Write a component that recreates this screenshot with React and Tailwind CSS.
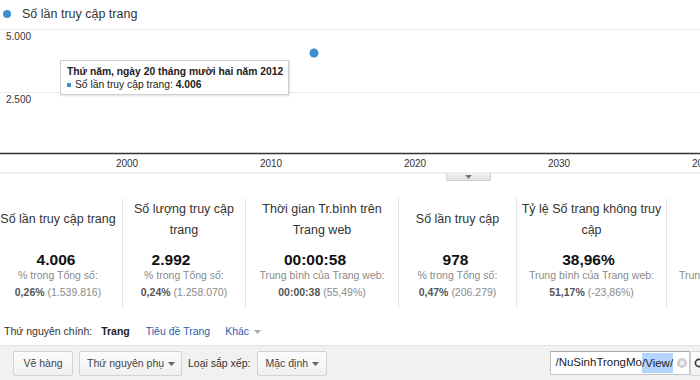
import React from "react";

const metrics = [
  {
    col: "w-[122px] pr-[6px]",
    title: ["Số lần truy cập trang"],
    value: "4.006",
    shift: "pr-[4px]",
    label: "% trong Tổng số:",
    strong: "0,26%",
    rest: "(1.539.816)",
  },
  {
    col: "w-[123px] border-l border-[#e6e6e6]",
    title: ["Số lượng truy cập", "trang"],
    value: "2.992",
    shift: "pr-[26px]",
    label: "% trong Tổng số:",
    strong: "0,24%",
    rest: "(1.258.070)",
  },
  {
    col: "w-[153px] border-l border-[#e6e6e6]",
    title: ["Thời gian Tr.bình trên", "Trang web"],
    value: "00:00:58",
    shift: "pr-[14px]",
    label: "Trung bình của Trang web:",
    strong: "00:00:38",
    rest: "(55,49%)",
  },
  {
    col: "w-[118px] border-l border-[#e6e6e6]",
    title: ["Số lần truy cập"],
    value: "978",
    shift: "pr-[4px]",
    label: "% trong Tổng số:",
    strong: "0,47%",
    rest: "(206.279)",
  },
  {
    col: "w-[150px] border-l border-[#e6e6e6]",
    title: ["Tỷ lệ Số trang không truy", "cập"],
    value: "38,96%",
    shift: "pr-[6px]",
    label: "Trung bình của Trang web:",
    strong: "51,17%",
    rest: "(-23,86%)",
  },
  {
    col: "w-[150px] border-l border-[#e6e6e6]",
    title: [""],
    value: "",
    shift: "",
    label: "Trung bình của Trang web:",
    strong: "",
    rest: "",
  },
];

const years = [
  { x: 127, t: "2000" },
  { x: 271, t: "2010" },
  { x: 415, t: "2020" },
  { x: 559, t: "2030" },
  { x: 703, t: "2040" },
];

const Caret = ({ className = "" }) => (
  <svg width="7" height="4" viewBox="0 0 7 4" className={`shrink-0 ${className}`}>
    <path d="M0 0h7L3.5 4z" fill="currentColor" />
  </svg>
);

const Chart = () => (
  <div className="relative h-[152px]">
    <svg width="700" height="152" className="block">
      <line x1="0" y1="1.5" x2="700" y2="1.5" stroke="#ececec" />
      <text x="6" y="12" fontSize="10" fill="#333">5.000</text>
      <line x1="0" y1="64.5" x2="700" y2="64.5" stroke="#ececec" />
      <text x="6" y="75" fontSize="10" fill="#333">2.500</text>
      <line x1="0" y1="125.5" x2="700" y2="125.5" stroke="#333" strokeWidth="1.5" />
      {years.map((y) => (
        <text key={y.t} x={y.x} y="139" fontSize="10" fill="#333" textAnchor="middle">
          {y.t}
        </text>
      ))}
      <line x1="0" y1="145" x2="700" y2="145" stroke="#dcdcdc" />
      <circle cx="314" cy="25" r="4.5" fill="#3b8fcf" />
    </svg>

    {/* tooltip */}
    <div className="absolute left-[60px] top-[32px] w-[229px] h-[35px] bg-white border border-[#cfcfcf] shadow-[1px_1px_2px_rgba(0,0,0,0.12)] px-[6px] pt-[4px] text-[10.3px] text-[#222]">
      <div className="font-bold leading-[14px] whitespace-nowrap">
        Thứ năm, ngày 20 tháng mười hai năm 2012
      </div>
      <div className="flex items-center leading-[12px] whitespace-nowrap">
        <span className="w-[4px] h-[4px] bg-[#3b8fcf] mr-[4px]" />
        Số lần truy cập trang:&nbsp;<b>4.006</b>
      </div>
    </div>

    {/* slider handle */}
    <div className="absolute left-[446px] top-[145px] w-[45px] h-[8px] bg-linear-to-b from-[#f4f4f4] to-[#e2e2e2] border border-t-0 border-[#d0d0d0] rounded-b-[2px] flex items-center justify-center text-[#777]">
      <Caret />
    </div>
  </div>
);

const Metric = ({ m }) => (
  <div className={`${m.col} shrink-0 h-[110px] flex flex-col items-center text-center`}>
    <div className="h-[43px] flex flex-col justify-center text-[12.5px] leading-[21px] text-[#333] whitespace-nowrap">
      {m.title.map((t) => (
        <div key={t}>{t}</div>
      ))}
    </div>
    <div className={`mt-[11px] h-[16px] text-[15.5px] leading-[16px] font-bold text-[#111] ${m.shift}`}>
      {m.value}
    </div>
    <div className="text-[10.5px] leading-[14px] text-[#8a8a8a] whitespace-nowrap">{m.label}</div>
    <div className="mt-[3px] h-[14px] text-[10.5px] leading-[14px] text-[#8a8a8a] whitespace-nowrap">
      <b className="text-[#555]">{m.strong}</b> {m.rest}
    </div>
  </div>
);

const Button = ({ children, className = "" }) => (
  <div
    className={`shrink-0 h-[25px] border border-[#d3d3d3] rounded-[2px] bg-linear-to-b from-[#fcfcfc] to-[#f0f0f0] flex items-center text-[10.5px] text-[#444] whitespace-nowrap ${className}`}
  >
    {children}
  </div>
);

export default function App() {
  return (
    <div className="w-[700px] h-[380px] overflow-hidden bg-white font-['Liberation_Sans',Arial,sans-serif] text-[#333]">
      {/* legend */}
      <div className="h-[28px] flex items-center pl-[3px]">
        <span className="w-[8px] h-[8px] rounded-full bg-[#3b8fcf]" />
        <span className="ml-[11px] text-[12.5px] text-[#333]">Số lần truy cập trang</span>
      </div>

      <Chart />

      {/* metrics */}
      <div className="pt-[18px] flex overflow-hidden">
        {metrics.map((m, i) => (
          <Metric key={i} m={m} />
        ))}
      </div>

      {/* primary dimension */}
      <div className="h-[37px] pt-[11px] pl-[4px] flex items-center text-[10.5px] whitespace-nowrap">
        <span className="text-[#333]">Thứ nguyên chính:</span>
        <span className="ml-[9px] text-[#222] font-semibold">Trang</span>
        <span className="ml-[16px] text-[#2a5db0]">Tiêu đề Trang</span>
        <span className="ml-[15px] text-[#2a5db0]">Khác</span>
        <Caret className="ml-[5px] text-[#aaa]" />
      </div>

      {/* toolbar */}
      <div className="relative h-[35px] bg-[#f1f1f1] border-t border-[#e2e2e2] flex items-start pt-[5px] pl-[13px] overflow-hidden">
        <div className="absolute left-[106px] top-[-5px] w-[8px] h-[8px] rotate-45 bg-[#f1f1f1] border-l border-t border-[#e2e2e2]" />
        <Button className="w-[60px] justify-center">Vẽ hàng</Button>
        <Button className="ml-[6px] w-[103px] pl-[7px]">
          Thứ nguyên phụ
          <Caret className="ml-auto mr-[6px] text-[#666]" />
        </Button>
        <span className="shrink-0 ml-[6px] h-[25px] flex items-center text-[10.5px] text-[#333] whitespace-nowrap">
          Loại sắp xếp:
        </span>
        <Button className="ml-[7px] w-[70px] pl-[7px]">
          Mặc định
          <Caret className="ml-auto mr-[7px] text-[#666]" />
        </Button>
        <div className="ml-[223px] h-[24px] w-[140px] shrink-0 bg-white border border-[#c4c4c4] border-t-[#a8a8a8] flex items-center pl-[4px] text-[11.5px] text-[#222] whitespace-nowrap">
          /NuSinhTrongMo<span className="bg-[#b5d5ff] leading-[20px]">/View/</span>
          <span className="ml-auto mr-[2px] w-[10px] h-[10px] shrink-0 rounded-full bg-[#cdcdcd] flex items-center justify-center">
            <svg width="6" height="6" viewBox="0 0 6 6">
              <path d="M1 1l4 4M5 1L1 5" stroke="#fff" strokeWidth="1.3" />
            </svg>
          </span>
        </div>
        <Button className="w-[40px] pl-[3px]">
          <svg width="12" height="12" viewBox="0 0 12 12">
            <circle cx="5" cy="5" r="3.6" fill="none" stroke="#333" strokeWidth="1.6" />
            <path d="M7.7 7.7L11 11" stroke="#333" strokeWidth="1.8" />
          </svg>
        </Button>
      </div>
    </div>
  );
}
